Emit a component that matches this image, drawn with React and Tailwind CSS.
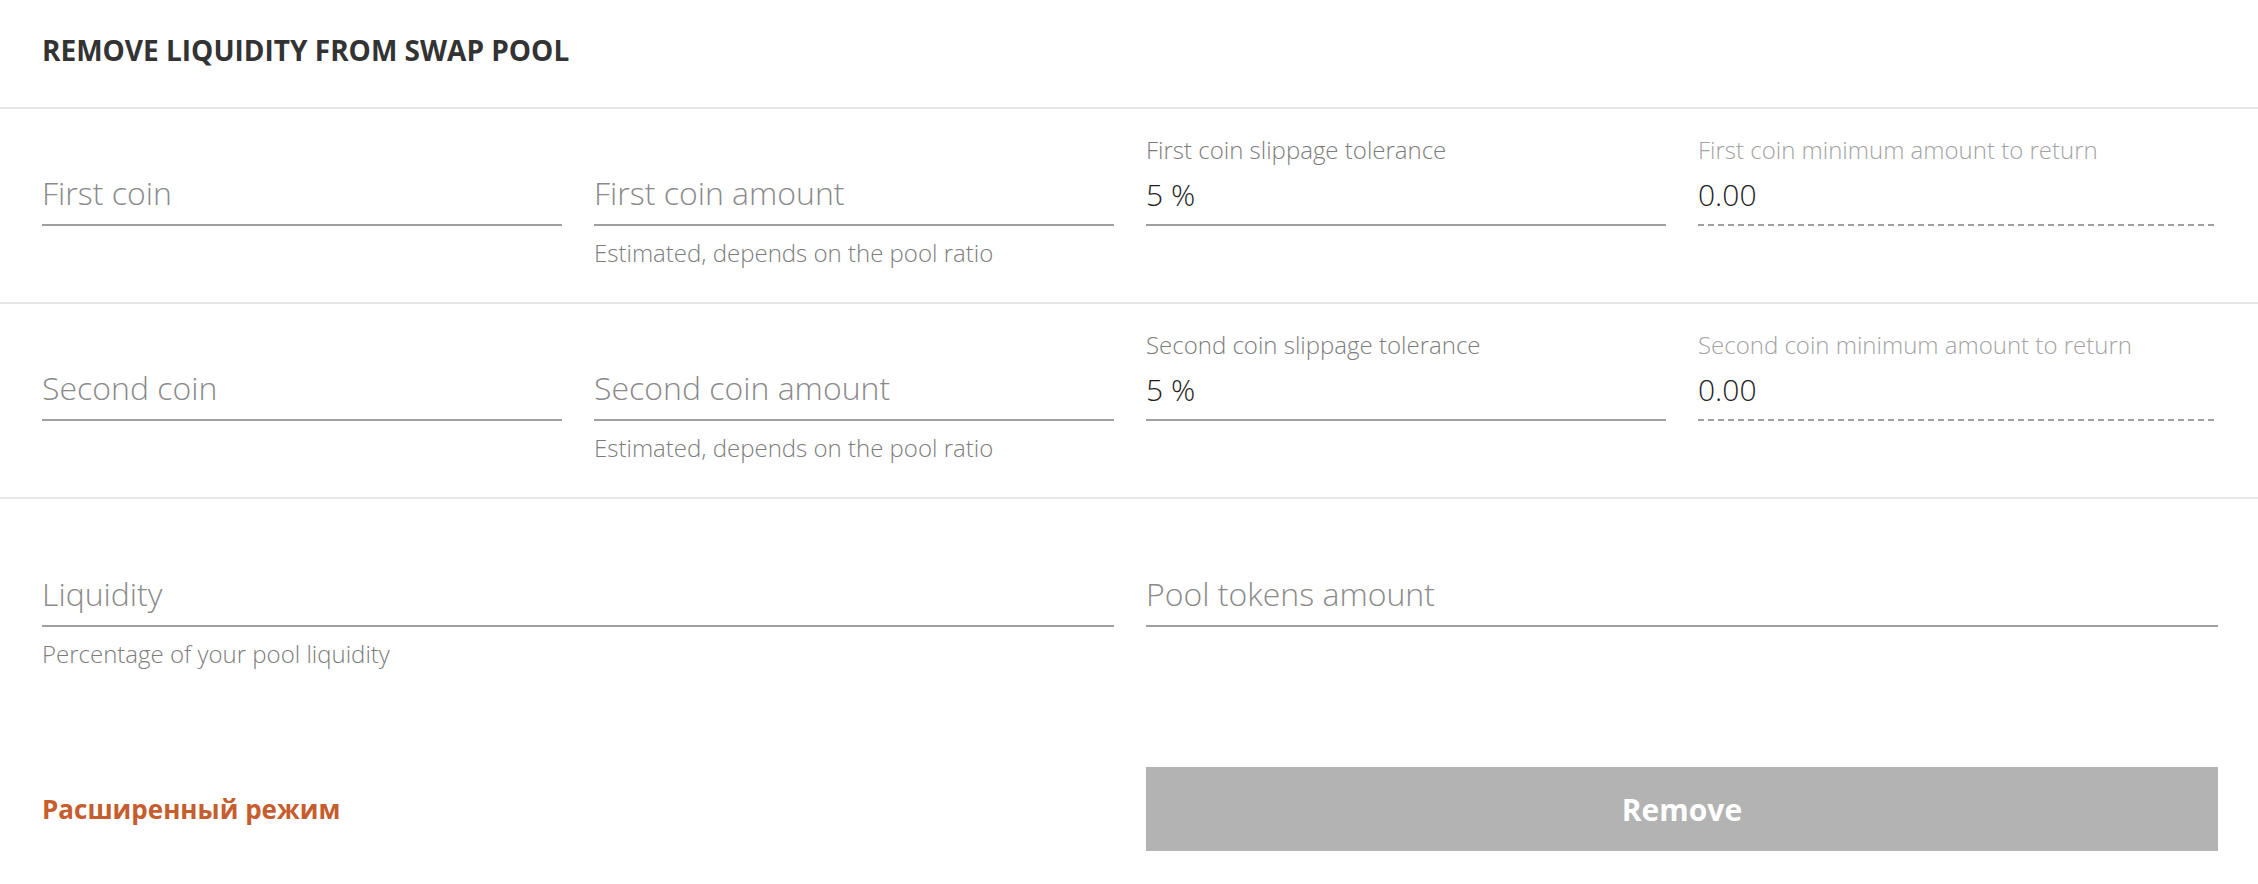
import React from 'react';

function Field({ label, placeholder, value, helper, disabled }) {
    const hasValue = value !== undefined;
    return (
        <div className="flex flex-col">
            <div className={`h-[28px] text-[24px] leading-[28px] font-light ${disabled ? 'text-[#a3a3a3]' : 'text-[#7d7d7d]'}`}>
                {label}
            </div>
            <div className="relative h-[62px]">
                <input
                    readOnly
                    value={value ?? ''}
                    placeholder={placeholder}
                    className={`w-full bg-transparent outline-none font-light text-[#1e1e1e] placeholder:text-[#8a8a8a] ${hasValue ? 'h-[61px] text-[30px]' : 'h-[56px] text-[32px]'}`}
                />
                {disabled ? (
                    <div className="absolute left-0 right-0 bottom-0 h-[2px] bg-[repeating-linear-gradient(to_right,#a0a0a0_0px,#a0a0a0_6px,transparent_6px,transparent_10px)]" />
                ) : (
                    <div className="absolute left-0 right-0 bottom-0 h-[2px] bg-[#a0a0a0]" />
                )}
            </div>
            {helper && (
                <div className="mt-[14px] text-[24px] leading-[26px] font-light text-[#7d7d7d]">{helper}</div>
            )}
        </div>
    );
}

function CoinRow({ which }) {
    return (
        <div className="h-[195px] border-b-2 border-[#e6e6e6] pt-[27px] pl-[42px] pr-[40px] grid grid-cols-4 gap-x-[32px] items-start">
            <Field placeholder={`${which} coin`} />
            <Field placeholder={`${which} coin amount`} helper="Estimated, depends on the pool ratio" />
            <Field label={`${which} coin slippage tolerance`} value="5 %" />
            <Field label={`${which} coin minimum amount to return`} value="0.00" disabled />
        </div>
    );
}

export default function App() {
    return (
        <div className="w-[2258px] h-[884px] bg-white font-['Open_Sans',sans-serif]">
            <div className="h-[109px] border-b-2 border-[#e6e6e6] px-[42px] flex items-center pb-[8px]">
                <h1 className="text-[28px] font-bold text-[#333333]">REMOVE LIQUIDITY FROM SWAP POOL</h1>
            </div>

            <CoinRow which="First" />
            <CoinRow which="Second" />

            <div className="h-[268px] pt-[38px] pl-[42px] pr-[40px] grid grid-cols-2 gap-x-[32px] items-start">
                <Field placeholder="Liquidity" helper="Percentage of your pool liquidity" />
                <Field placeholder="Pool tokens amount" />
            </div>

            <div className="pl-[42px] pr-[40px] grid grid-cols-2 gap-x-[32px] items-center">
                <button className="justify-self-start text-[26px] font-bold text-[#c65d2e]">Расширенный режим</button>
                <button className="h-[84px] bg-[#b3b3b3] text-white text-[30px] font-bold">Remove</button>
            </div>
        </div>
    );
}
